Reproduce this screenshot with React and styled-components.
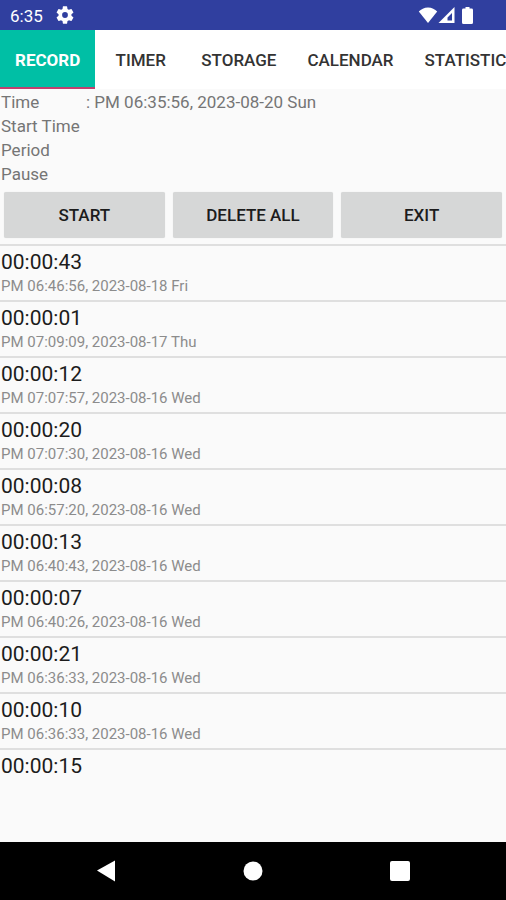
import React from 'react';
import styled, { createGlobalStyle } from 'styled-components';

const GlobalStyle = createGlobalStyle`
    * {
        box-sizing: border-box;
    }
    body {
        margin: 0;
        background: #fafafa;
        font-family: Roboto, "Liberation Sans", sans-serif;
    }
`

const Screen = styled.div`
    display: flex;
    flex-direction: column;
    min-height: 100vh;
    background: #fafafa;
`

const StatusBar = styled.header`
    display: flex;
    align-items: center;
    justify-content: space-between;
    height: 30px;
    padding: 0 33px 0 10px;
    background: #303f9f;
    color: #fff;
`

const StatusGroup = styled.div`
    display: flex;
    align-items: center;
    gap: ${props => props.$gap};
`

const Clock = styled.span`
    font-size: 17px;
    line-height: 30px;
    padding-top: 2px;
`

const TabBar = styled.nav`
    display: flex;
    gap: 1px;
    height: 59px;
    overflow: hidden;
    background: #fff;
`

const Tab = styled.button`
    flex: none;
    min-width: 89px;
    padding: 2px 15px 0;
    border: 0;
    border-bottom: 2px solid ${props => props.$active ? '#c2406f' : 'transparent'};
    background: ${props => props.$active ? '#00bfa5' : '#fff'};
    color: ${props => props.$active ? '#fff' : '#333'};
    font-family: inherit;
    font-size: 17px;
    font-weight: ${props => props.$active ? 700 : 500};
    cursor: pointer;
`

const InfoList = styled.dl`
    margin: 0;
    padding: 1px 1px 0;
    color: #757575;
    font-size: 17px;
    line-height: 24px;
`

const InfoRow = styled.div`
    display: flex;
`

const InfoLabel = styled.dt`
    width: 85px;
`

const InfoValue = styled.dd`
    margin: 0;
`

const ButtonRow = styled.div`
    display: grid;
    grid-template-columns: repeat(3, 1fr);
    gap: 8px;
    padding: 6px 4px;
`

const ActionButton = styled.button`
    height: 46px;
    padding: 0;
    border: 0;
    border-radius: 2px;
    background: #d6d7d7;
    box-shadow: 0 0 1px rgba(0, 0, 0, 0.14);
    color: #1c1c1c;
    font-family: inherit;
    font-size: 17px;
    font-weight: 500;
    cursor: pointer;
`

const RecordList = styled.ul`
    flex: 1;
    margin: 0;
    padding: 0;
    list-style: none;
`

const Record = styled.li`
    height: 56px;
    padding: 3px 1px 0;
    border-top: 2px solid #dfdfdf;
`

const Elapsed = styled.div`
    color: #1c1c1c;
    font-size: 21px;
    line-height: 26px;
`

const Stamp = styled.div`
    color: #8c8c8c;
    font-size: 15px;
    line-height: 22px;
`

const NavBar = styled.footer`
    display: grid;
    grid-template-columns: repeat(3, 1fr);
    height: 58px;
    padding: 0 32px;
    background: #000;
`

const NavButton = styled.button`
    display: flex;
    align-items: center;
    justify-content: center;
    padding: 0;
    border: 0;
    background: none;
    color: #fff;
    cursor: pointer;
`

const GearIcon = () => (
    <svg width="18" height="18" viewBox="2 2 20 20" fill="currentColor">
        <path d="M19.14 12.94c.04-.3.06-.61.06-.94 0-.32-.02-.64-.07-.94l2.03-1.58a.49.49 0 0 0 .12-.61l-1.92-3.32a.488.488 0 0 0-.59-.22l-2.39.96c-.5-.38-1.03-.7-1.62-.94l-.36-2.54a.484.484 0 0 0-.48-.41h-3.84c-.24 0-.43.17-.47.41l-.36 2.54c-.59.24-1.13.57-1.62.94l-2.39-.96c-.22-.08-.47 0-.59.22L2.74 8.87c-.12.21-.08.47.12.61l2.03 1.58c-.05.3-.09.63-.09.94s.02.64.07.94l-2.03 1.58a.49.49 0 0 0-.12.61l1.92 3.32c.12.22.37.29.59.22l2.39-.96c.5.38 1.03.7 1.62.94l.36 2.54c.05.24.24.41.48.41h3.84c.24 0 .44-.17.47-.41l.36-2.54c.59-.24 1.13-.56 1.62-.94l2.39.96c.22.08.47 0 .59-.22l1.92-3.32c.12-.22.07-.47-.12-.61l-2.01-1.58zM12 15.2A3.2 3.2 0 1 1 12 8.8a3.2 3.2 0 0 1 0 6.4z" />
    </svg>
)

const WifiIcon = () => (
    <svg width="20" height="16" viewBox="0 0 20 16" fill="currentColor">
        <path d="M10 16 L0.8 4.6 C3 2 6.2 0.4 10 0.4 S17 2 19.2 4.6 Z" />
    </svg>
)

const SignalIcon = () => (
    <svg width="17" height="16" viewBox="0 0 17 16" fill="currentColor" fillRule="evenodd">
        <path d="M0.5 16 L16.5 0 V16 Z M9.5 13.6 H14 V6 L9.5 10.5 Z" />
    </svg>
)

const BatteryIcon = () => (
    <svg width="11" height="17" viewBox="0 0 11 17" fill="currentColor">
        <path d="M3.5 0 H7.5 V1.6 H9.5 Q11 1.6 11 3 V15.5 Q11 17 9.5 17 H1.5 Q0 17 0 15.5 V3 Q0 1.6 1.5 1.6 H3.5 Z" />
    </svg>
)

const BackIcon = () => (
    <svg width="20" height="22" viewBox="0 0 20 22" fill="currentColor">
        <path d="M1 10.6 L19 0.4 V21.4 Z" />
    </svg>
)

const HomeIcon = () => (
    <svg width="20" height="20" viewBox="0 0 20 20" fill="currentColor">
        <circle cx="10" cy="10" r="9.5" />
    </svg>
)

const RecentIcon = () => (
    <svg width="20" height="20" viewBox="0 0 20 20" fill="currentColor">
        <rect width="20" height="20" rx="2" />
    </svg>
)

const tabs = ['RECORD', 'TIMER', 'STORAGE', 'CALENDAR', 'STATISTICS'];

const info = [
    { label: 'Time', value: ': PM 06:35:56, 2023-08-20 Sun' },
    { label: 'Start Time' },
    { label: 'Period' },
    { label: 'Pause' },
];

const actions = ['START', 'DELETE ALL', 'EXIT'];

const records = [
    { elapsed: '00:00:43', stamp: 'PM 06:46:56, 2023-08-18 Fri' },
    { elapsed: '00:00:01', stamp: 'PM 07:09:09, 2023-08-17 Thu' },
    { elapsed: '00:00:12', stamp: 'PM 07:07:57, 2023-08-16 Wed' },
    { elapsed: '00:00:20', stamp: 'PM 07:07:30, 2023-08-16 Wed' },
    { elapsed: '00:00:08', stamp: 'PM 06:57:20, 2023-08-16 Wed' },
    { elapsed: '00:00:13', stamp: 'PM 06:40:43, 2023-08-16 Wed' },
    { elapsed: '00:00:07', stamp: 'PM 06:40:26, 2023-08-16 Wed' },
    { elapsed: '00:00:21', stamp: 'PM 06:36:33, 2023-08-16 Wed' },
    { elapsed: '00:00:10', stamp: 'PM 06:36:33, 2023-08-16 Wed' },
    { elapsed: '00:00:15' },
];

class App extends React.Component {
    constructor(props) {
        super(props);
        this.state = {
            activeTab: 'RECORD'
        };
    }

    selectTab = (tab) => {
        this.setState({ activeTab: tab });
    }

    render() {
        return (
            <Screen>
                <GlobalStyle />
                <StatusBar>
                    <StatusGroup $gap="13px">
                        <Clock>6:35</Clock>
                        <GearIcon />
                    </StatusGroup>
                    <StatusGroup $gap="7px">
                        <StatusGroup $gap="0">
                            <WifiIcon />
                            <SignalIcon />
                        </StatusGroup>
                        <BatteryIcon />
                    </StatusGroup>
                </StatusBar>
                <TabBar>
                    {tabs.map(tab => (
                        <Tab
                            key={tab}
                            $active={tab === this.state.activeTab}
                            onClick={() => this.selectTab(tab)}
                        >
                            {tab}
                        </Tab>
                    ))}
                </TabBar>
                <InfoList>
                    {info.map(item => (
                        <InfoRow key={item.label}>
                            <InfoLabel>{item.label}</InfoLabel>
                            <InfoValue>{item.value}</InfoValue>
                        </InfoRow>
                    ))}
                </InfoList>
                <ButtonRow>
                    {actions.map(action => (
                        <ActionButton key={action}>{action}</ActionButton>
                    ))}
                </ButtonRow>
                <RecordList>
                    {records.map(record => (
                        <Record key={record.elapsed}>
                            <Elapsed>{record.elapsed}</Elapsed>
                            {record.stamp && <Stamp>{record.stamp}</Stamp>}
                        </Record>
                    ))}
                </RecordList>
                <NavBar>
                    <NavButton aria-label="Back"><BackIcon /></NavButton>
                    <NavButton aria-label="Home"><HomeIcon /></NavButton>
                    <NavButton aria-label="Recent apps"><RecentIcon /></NavButton>
                </NavBar>
            </Screen>
        );
    }
}

export default App;
